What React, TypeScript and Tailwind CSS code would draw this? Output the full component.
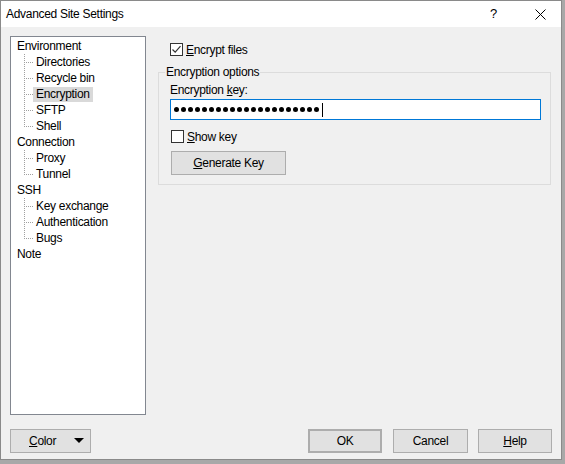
import React from "react";

const font = { fontFamily: '"Liberation Sans", Arial, sans-serif' };

const Connector = ({ last }: { last?: boolean }) => {
  const v = [];
  for (let y = 0; y < (last ? 9 : 16); y += 2) v.push(y);
  const h = [];
  for (let x = 2; x < 10; x += 2) h.push(x);
  return (
    <svg width="10" height="16" className="shrink-0">
      {v.map((y) => (
        <rect key={"v" + y} x="0" y={y} width="1" height="1" fill="#a0a0a0" />
      ))}
      {h.map((x) => (
        <rect key={"h" + x} x={x} y="8" width="1" height="1" fill="#a0a0a0" />
      ))}
    </svg>
  );
};

const tree = [
  { name: "Environment", children: ["Directories", "Recycle bin", "Encryption", "SFTP", "Shell"] },
  { name: "Connection", children: ["Proxy", "Tunnel"] },
  { name: "SSH", children: ["Key exchange", "Authentication", "Bugs"] },
  { name: "Note", children: [] as string[] },
];

const Checkbox = ({ checked }: { checked?: boolean }) => (
  <span className="w-[13px] h-[13px] border border-[#333333] bg-white flex items-center justify-center shrink-0">
    {checked && (
      <svg width="11" height="11" viewBox="0 0 11 11">
        <path d="M1.5 5.5 L4.2 8.2 L9.5 2.2" fill="none" stroke="#333" strokeWidth="1.2" />
      </svg>
    )}
  </span>
);

const Button = ({ children, className = "" }: { children: React.ReactNode; className?: string }) => (
  <div
    className={
      "h-[24px] bg-[#e1e1e1] border border-[#adadad] flex items-center justify-center text-[12px] text-black " +
      className
    }
  >
    {children}
  </div>
);

export default function App() {
  return (
    <div className="w-[565px] h-[464px] bg-[#a8a8a8] text-black tracking-[-0.3px]" style={font}>
      <div className="w-[562px] h-[460px] border border-[#8a8a8a] bg-[#f0f0f0] flex flex-col">
        {/* title bar */}
        <div className="h-[26px] bg-white flex items-center shrink-0">
          <span className="ml-[5px] text-[12px]">Advanced Site Settings</span>
          <span className="ml-auto text-[13px] mr-[38px]">?</span>
          <svg width="11" height="11" className="mr-[15px]" viewBox="0 0 11 11">
            <path d="M0.5 0.5 L10.5 10.5 M10.5 0.5 L0.5 10.5" stroke="#000" strokeWidth="1" />
          </svg>
        </div>

        <div className="flex pt-[9px] pl-[9px]">
          {/* tree */}
          <div className="w-[136px] h-[379px] bg-white border border-[#828790] pt-[1px] text-[12px] shrink-0">
            {tree.map((g) => (
              <div key={g.name}>
                <div className="h-4 flex items-center pl-[6px]">{g.name}</div>
                {g.children.map((c, i) => (
                  <div key={c} className="h-4 flex items-center pl-[13px]">
                    <Connector last={i === g.children.length - 1} />
                    <span
                      className={
                        "px-[3px] h-[15px] flex items-center -ml-[1px] " +
                        (c === "Encryption" ? "bg-[#d9d9d9]" : "")
                      }
                    >
                      {c}
                    </span>
                  </div>
                ))}
              </div>
            ))}
          </div>

          {/* right panel */}
          <div className="ml-[12px] w-[393px] text-[12px]">
            <div className="flex items-center mt-[7px] ml-[12px] h-[13px]">
              <Checkbox checked />
              <span className="ml-[3px]">
                <u>E</u>ncrypt files
              </span>
            </div>

            <div className="relative mt-[16px] border border-[#dcdcdc] h-[113px] px-[11px] pt-[10px]">
              <span className="absolute -top-[8px] left-[6px] bg-[#f0f0f0] px-[1px] leading-[15px]">
                Encryption options
              </span>
              <div className="leading-[15px]">
                Encryption <u>k</u>ey:
              </div>
              <div className="mt-[1px] h-[21px] w-[371px] bg-white border border-[#0078d7] flex items-center pl-[3px] gap-[2px]">
                {Array.from({ length: 21 }).map((_, i) => (
                  <span key={i} className="w-[5px] h-[5px] rounded-full bg-black" />
                ))}
                <span className="w-[1px] h-[14px] bg-black ml-[1px]" />
              </div>
              <div className="flex items-center mt-[10px] h-[13px] ml-[1px]">
                <Checkbox />
                <span className="ml-[3px]">
                  <u>S</u>how key
                </span>
              </div>
              <Button className="w-[115px] mt-[8px] ml-[1px]">
                <span>
                  <u>G</u>enerate Key
                </span>
              </Button>
            </div>
          </div>
        </div>

        {/* bottom buttons */}
        <div className="flex mt-[14px] pl-[9px] pr-[9px]">
          <Button className="w-[81px] justify-start pl-[18px] relative">
            <span>
              <u>C</u>olor
            </span>
            <svg width="10" height="6" viewBox="0 0 10 6" className="ml-auto mr-[6px]">
              <path d="M0 0 L10 0 L5 5 Z" fill="#000" />
            </svg>
          </Button>
          <Button className="w-[74px] ml-auto border-2 border-[#0078d7]">OK</Button>
          <Button className="w-[75px] ml-[11px]">Cancel</Button>
          <Button className="w-[74px] ml-[10px]">
            <span>
              <u>H</u>elp
            </span>
          </Button>
        </div>
      </div>
    </div>
  );
}
